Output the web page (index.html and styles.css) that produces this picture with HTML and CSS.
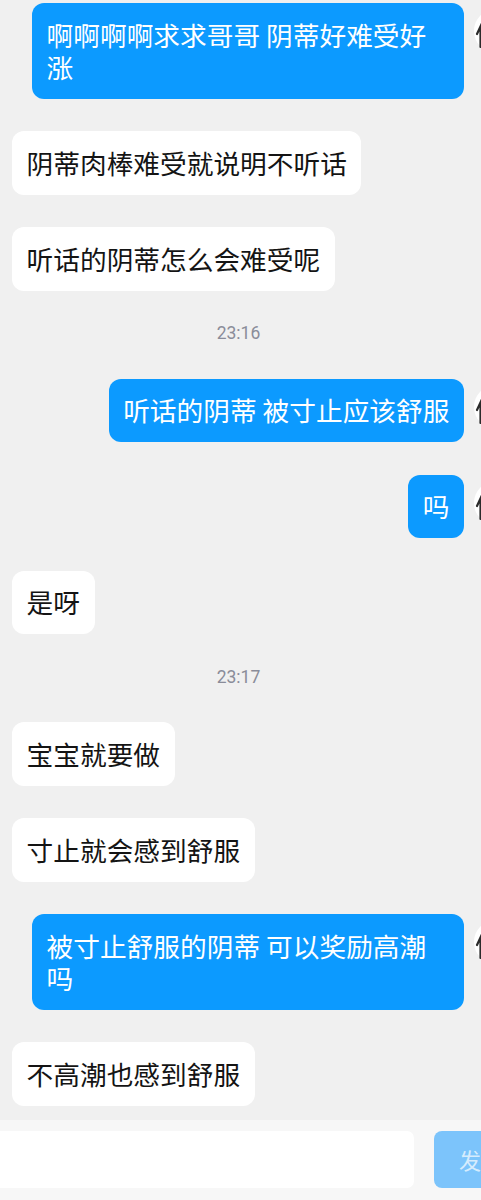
FILE: index.html
```html
<!DOCTYPE html>
<html lang="zh-CN">
<head>
<meta charset="utf-8">
<title>聊天</title>
<link rel="stylesheet" href="styles.css">
</head>
<body>
<div class="page">
  <main class="chat">
    <div class="row right">
      <div class="bubble mine">啊啊啊啊求求哥哥 阴蒂好难受好涨</div>
      <svg class="avatar" viewBox="0 0 44 44" aria-hidden="true"><circle cx="22" cy="22" r="22" fill="#fff"/><path d="M9 12 L3 25 M6.5 19 L6.5 38" stroke="#2b2b2b" stroke-width="2.2" fill="none" stroke-linecap="round"/></svg>
    </div>
    <div class="row left"><div class="bubble">阴蒂肉棒难受就说明不听话</div></div>
    <div class="row left"><div class="bubble">听话的阴蒂怎么会难受呢</div></div>
    <div class="time">23:16</div>
    <div class="row right">
      <div class="bubble mine">听话的阴蒂 被寸止应该舒服</div>
      <svg class="avatar" viewBox="0 0 44 44" aria-hidden="true"><circle cx="22" cy="22" r="22" fill="#fff"/><path d="M9 12 L3 25 M6.5 19 L6.5 38" stroke="#2b2b2b" stroke-width="2.2" fill="none" stroke-linecap="round"/></svg>
    </div>
    <div class="row right">
      <div class="bubble mine">吗</div>
      <svg class="avatar" viewBox="0 0 44 44" aria-hidden="true"><circle cx="22" cy="22" r="22" fill="#fff"/><path d="M9 12 L3 25 M6.5 19 L6.5 38" stroke="#2b2b2b" stroke-width="2.2" fill="none" stroke-linecap="round"/></svg>
    </div>
    <div class="row left"><div class="bubble">是呀</div></div>
    <div class="time">23:17</div>
    <div class="row left"><div class="bubble">宝宝就要做</div></div>
    <div class="row left"><div class="bubble">寸止就会感到舒服</div></div>
    <div class="row right">
      <div class="bubble mine">被寸止舒服的阴蒂 可以奖励高潮吗</div>
      <svg class="avatar" viewBox="0 0 44 44" aria-hidden="true"><circle cx="22" cy="22" r="22" fill="#fff"/><path d="M9 12 L3 25 M6.5 19 L6.5 38" stroke="#2b2b2b" stroke-width="2.2" fill="none" stroke-linecap="round"/></svg>
    </div>
    <div class="row left"><div class="bubble">不高潮也感到舒服</div></div>
  </main>
  <footer class="bar">
    <div class="input"></div>
    <div class="send">发</div>
  </footer>
</div>
</body>
</html>
```
FILE: styles.css
```css
html, body {
  margin: 0;
  padding: 0;
  background: #f0f0f0;
  overflow: hidden;
}
body {
  font-family: "Noto Sans CJK SC", "Noto Sans", sans-serif;
  width: 481px;
  height: 1200px;
}
.page {
  display: flex;
  flex-direction: column;
  height: 1200px;
  overflow: hidden;
}
.chat {
  display: flex;
  flex-direction: column;
  padding-top: 3px;
}
.row {
  display: flex;
  align-items: flex-start;
  margin-bottom: 32.5px;
}
.row:last-child {
  margin-bottom: 0;
}
.row.left {
  justify-content: flex-start;
  padding-left: 12px;
}
.row.right {
  justify-content: flex-end;
  margin-right: -37px;
}
.bubble {
  max-width: 432px;
  box-sizing: border-box;
  padding: 15.75px 14.6px;
  font-size: 26.7px;
  line-height: 32px;
  color: #141414;
  background: #ffffff;
  border-radius: 12px;
  word-break: break-all;
}
.bubble.mine {
  background: #0c9aff;
  color: #ffffff;
}
.avatar {
  flex: none;
  width: 44px;
  height: 44px;
  margin-left: 10px;
  margin-top: 6px;
}
.time {
  text-align: center;
  font-family: Roboto, "Noto Sans", sans-serif;
  font-size: 17.5px;
  line-height: 21px;
  color: #8a8c99;
  margin-bottom: 34.5px;
  margin-left: -4px;
}
.bar {
  margin-top: auto;
  flex: none;
  height: 80px;
  background: #f7f7f7;
  display: flex;
  align-items: flex-start;
  padding-top: 11px;
  box-sizing: border-box;
}
.input {
  flex: none;
  width: 414px;
  height: 57px;
  background: #ffffff;
  border-radius: 0 7px 7px 0;
}
.send {
  flex: none;
  margin-left: 20px;
  width: 47px;
  height: 57px;
  background: #7cc4fb;
  border-radius: 8px 0 0 8px;
  color: #d6ecfd;
  font-size: 22px;
  line-height: 57px;
  padding-left: 25px;
  box-sizing: border-box;
  white-space: nowrap;
  overflow: hidden;
}
```
